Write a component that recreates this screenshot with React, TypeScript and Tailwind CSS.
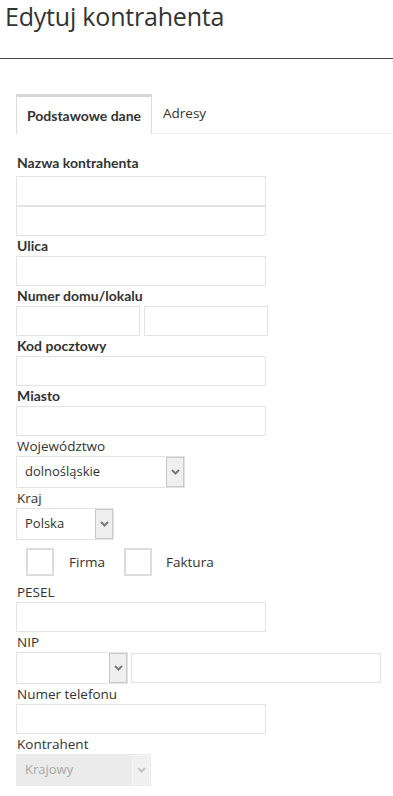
import React from "react";

const Chevron = ({ color = "#777" }: { color?: string }) => (
  <svg width="9" height="6" viewBox="0 0 9 6">
    <path d="M1 1 L4.5 4.5 L8 1" stroke={color} strokeWidth="2" fill="none" />
  </svg>
);

const Input = ({ w = "w-[250px]" }: { w?: string }) => (
  <div className={`${w} h-[30px] border border-[#e3e3e3] bg-white`} />
);

const BoldLabel = ({ children }: { children: React.ReactNode }) => (
  <div className="h-[20px] leading-[20px] text-[14px] font-bold text-[#333] pl-px" style={{ fontFamily: "Lato, 'Open Sans', sans-serif" }}>
    {children}
  </div>
);

const Label = ({ children }: { children: React.ReactNode }) => (
  <div className="h-[20px] leading-[20px] text-[13.5px] text-[#333] pl-px">{children}</div>
);

const Select = ({ w, text, disabled }: { w: string; text?: string; disabled?: boolean }) => (
  <div
    className={`${w} h-[32px] flex items-stretch border ${
      disabled ? "border-[#ebebeb] bg-[#ebebeb]" : "border-[#e3e3e3] bg-white"
    }`}
  >
    <div className={`flex-1 flex items-center pl-[8px] text-[13px] ${disabled ? "text-[#a8a8a8]" : "text-[#333]"}`}>
      {text}
    </div>
    <div
      className={`w-[18px] flex items-center justify-center border ${
        disabled ? "bg-[#f0f0f0] border-[#f4f4f4]" : "bg-[#efefef] border-[#c9c9c9]"
      }`}
    >
      <Chevron color={disabled ? "#c4c4c4" : "#7a7a7a"} />
    </div>
  </div>
);

export default function App() {
  return (
    <div className="w-[393px] min-h-[796px] bg-white text-[#333]" style={{ fontFamily: "'Open Sans', 'Noto Sans', sans-serif" }}>
      <div className="pl-[5px] pt-[1px] h-[58px]">
        <h1 className="text-[25px] leading-[30px] text-[#333] font-normal tracking-[-0.2px]">Edytuj kontrahenta</h1>
      </div>
      <div className="h-px bg-[#4a4a4a]" />
      <div className="pl-[16px] pt-[35px]">
        <div className="flex items-end h-[40px] border-b border-[#eeeeee]">
          <div className="h-[40px] w-[136px] border-x border-t-[3px] border-[#dcdcdc] border-t-[#d6d6d6] bg-white -mb-px flex items-center justify-center text-[14px] font-bold" style={{ fontFamily: "Lato, 'Open Sans', sans-serif" }}>
            Podstawowe dane
          </div>
          <div className="h-[40px] flex items-center pl-[11px] text-[13.5px]">Adresy</div>
        </div>
        <div className="pt-[19px]">
          <BoldLabel>Nazwa kontrahenta</BoldLabel>
          <div className="pt-[3px]">
            <Input />
          </div>
          <Input />
          <BoldLabel>Ulica</BoldLabel>
          <Input />
          <BoldLabel>Numer domu/lokalu</BoldLabel>
          <div className="flex gap-[4px]">
            <Input w="w-[124px]" />
            <Input w="w-[124px]" />
          </div>
          <BoldLabel>Kod pocztowy</BoldLabel>
          <Input />
          <BoldLabel>Miasto</BoldLabel>
          <Input />
          <Label>Województwo</Label>
          <Select w="w-[169px]" text="dolnośląskie" />
          <Label>Kraj</Label>
          <Select w="w-[98px]" text="Polska" />
          <div className="flex items-center h-[42px] pl-[10px] pt-[2px]">
            <div className="w-[28px] h-[28px] border-2 border-[#dddddd]" />
            <span className="ml-[15px] w-[55px] text-[13.5px]">Firma</span>
            <div className="w-[28px] h-[28px] border-2 border-[#dddddd]" />
            <span className="ml-[14px] text-[13.5px]">Faktura</span>
          </div>
          <Label>PESEL</Label>
          <Input />
          <Label>NIP</Label>
          <div className="flex items-center gap-[3px]">
            <Select w="w-[112px]" />
            <Input w="w-[250px]" />
          </div>
          <Label>Numer telefonu</Label>
          <Input />
          <Label>Kontrahent</Label>
          <Select w="w-[135px]" text="Krajowy" disabled />
        </div>
      </div>
    </div>
  );
}
